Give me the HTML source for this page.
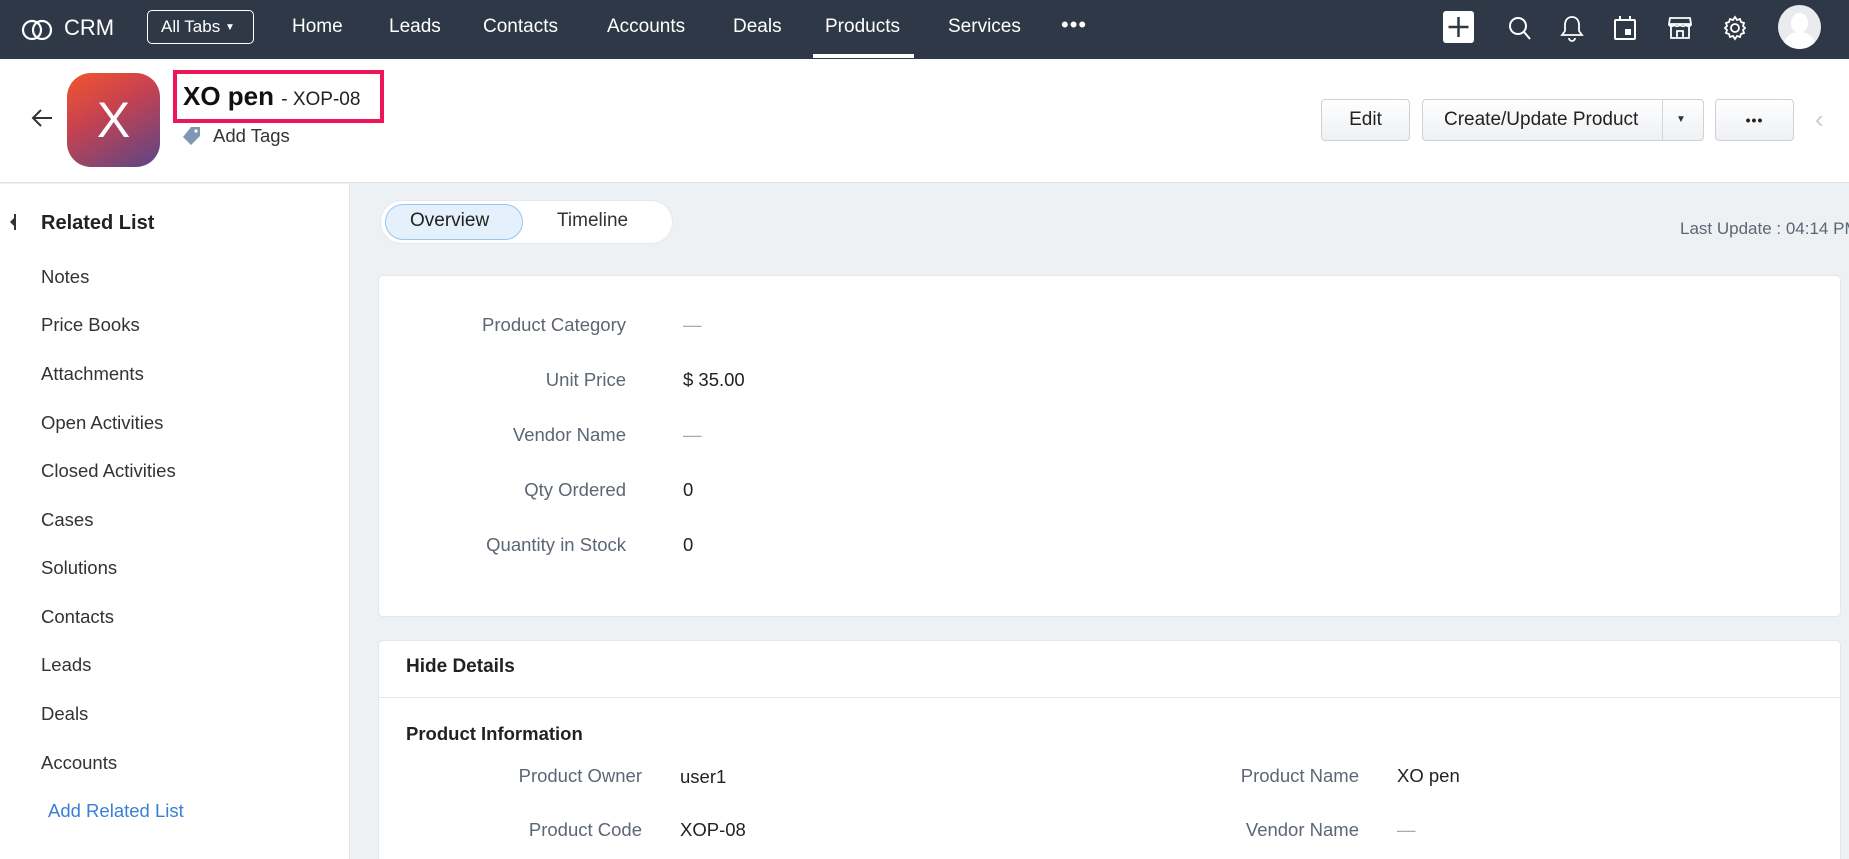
<!DOCTYPE html>
<html style="width:1849px;height:859px;overflow:hidden"><head><meta charset="utf-8"><style>
*{box-sizing:border-box;margin:0;padding:0}
body{width:1849px;height:859px;overflow:hidden;font-family:"Liberation Sans",sans-serif;background:#eef1f4;position:relative;color:#222}
.a{position:absolute;white-space:nowrap}
.nav{position:absolute;left:0;top:0;width:1849px;height:59px;background:#2f3846}
.nav .t{position:absolute;top:16px;color:#fff;font-size:19px}
.hdr{position:absolute;left:0;top:59px;width:1849px;height:124px;background:#fff;border-bottom:1px solid #dde1e6}
.side{position:absolute;left:0;top:184px;width:350px;height:675px;background:#fff;border-right:1px solid #e2e5e9}
.side .i{position:absolute;left:41px;font-size:18.5px;color:#333}
.btn{position:absolute;top:99px;height:42px;border:1px solid #cdd2d8;border-radius:4px;background:linear-gradient(#fff,#eef0f3);font-size:19px;color:#222;text-align:center;line-height:40px}
.card{position:absolute;left:378px;width:1463px;background:#fff;border:1px solid #e3e6ea;border-radius:5px}
.lb{position:absolute;font-size:18.5px;color:#5d6674;text-align:right}
.vl{position:absolute;font-size:18.5px;color:#222}
</style></head><body>
<div class="nav">
 <svg class="a" style="left:21px;top:16px" width="32" height="28" viewBox="0 0 32 28"><ellipse cx="11" cy="14" rx="9" ry="9" fill="none" stroke="#fff" stroke-width="2.2"/><ellipse cx="21" cy="14" rx="9" ry="9" fill="none" stroke="#fff" stroke-width="2.2"/></svg>
 <div class="t" style="left:64px;font-size:22px;top:15px">CRM</div>
 <div class="a" style="left:147px;top:10px;width:107px;height:34px;border:1.5px solid #fff;border-radius:5px;color:#fff;font-size:17px;line-height:31px;padding-left:13px">All Tabs <span style="font-size:10px;vertical-align:2px">▼</span></div>
 <div class="t" style="left:292px">Home</div>
 <div class="t" style="left:389px">Leads</div>
 <div class="t" style="left:483px">Contacts</div>
 <div class="t" style="left:607px">Accounts</div>
 <div class="t" style="left:733px">Deals</div>
 <div class="t" style="left:825px">Products</div>
 <div class="a" style="left:813px;top:54px;width:101px;height:4px;background:#fff"></div>
 <div class="t" style="left:948px">Services</div>
 <div class="t" style="left:1061px;top:12px;font-size:22px;letter-spacing:1px">•••</div>
 <div class="a" style="left:1443px;top:11px;width:31px;height:32px;background:#fff;border-radius:3px"></div>
 <svg class="a" style="left:1443px;top:11px" width="31" height="32"><path d="M15.5 6v20M5.5 16h20" stroke="#2f3846" stroke-width="2.5"/></svg>
 <svg class="a" style="left:1507px;top:14px" width="26" height="28" fill="none" stroke="#fff" stroke-width="2"><circle cx="11" cy="12" r="8"/><path d="M17 18l6 7"/></svg>
 <svg class="a" style="left:1560px;top:14px" width="24" height="28" fill="none" stroke="#fff" stroke-width="1.8"><path d="M12 3c-5 0-7 4-7 8v6l-3 4h20l-3-4v-6c0-4-2-8-7-8z"/><path d="M9 24a3 3 0 006 0"/></svg>
 <svg class="a" style="left:1613px;top:14px" width="24" height="28" fill="none" stroke="#fff" stroke-width="2"><rect x="2" y="6" width="20" height="19" rx="1"/><path d="M7 2v5M17 2v5"/><rect x="13" y="16" width="4" height="4" fill="#fff"/></svg>
 <svg class="a" style="left:1668px;top:14px" width="24" height="28" fill="none" stroke="#fff" stroke-width="1.8"><path d="M2 4h20l1 6H1zM3 10v14h18V10M9 24v-7h6v7M1 10c0 3 5 3 5 0c0 3 6 3 6 0c0 3 6 3 6 0c0 3 5 3 5 0"/></svg>
 <svg class="a" style="left:1722px;top:14px" width="26" height="28" fill="none" stroke="#fff" stroke-width="1.8"><circle cx="13" cy="14" r="4"/><path d="M13 3l2 3 3-1 1 3 3 1-1 3 2 2-2 2 1 3-3 1-1 3-3-1-2 3-2-3-3 1-1-3-3-1 1-3-2-2 2-2-1-3 3-1 1-3 3 1z"/></svg>
 <div class="a" style="left:1778px;top:5px;width:43px;height:44px;border-radius:50%;background:#e9ebee;overflow:hidden"><div class="a" style="left:13px;top:8px;width:17px;height:20px;border-radius:50%;background:#fff"></div><div class="a" style="left:6px;top:27px;width:31px;height:24px;border-radius:50%;background:#fff"></div></div>
</div>
<div class="hdr">
 <svg class="a" style="left:30px;top:49px" width="24" height="20" fill="none" stroke="#333" stroke-width="2"><path d="M22 10H3M11 2L3 10l8 8"/></svg>
 <div class="a" style="left:67px;top:14px;width:93px;height:94px;border-radius:24px;background:linear-gradient(150deg,#f2562f 0%,#c8424f 40%,#5a4687 100%);color:#fff;font-size:50px;text-align:center;line-height:94px">X</div>
 <div class="a" style="left:173px;top:11px;width:211px;height:53px;border:4px solid #ec1659"></div>
 <div class="a" style="left:183px;top:22px;font-size:26px;color:#111;font-weight:bold">XO pen <span style="font-size:19px;color:#222;font-weight:normal">- XOP-08</span></div>
 <svg class="a" style="left:181px;top:66px" width="22" height="22"><path d="M10 2h9v9L10 20 2 12z" fill="#7f97b0"/><circle cx="15" cy="6" r="1.6" fill="#fff"/></svg>
 <div class="a" style="left:213px;top:66px;font-size:18.5px;color:#333">Add Tags</div>
</div>
<div class="btn" style="left:1321px;width:89px">Edit</div>
<div class="btn" style="left:1422px;width:282px;text-align:left;padding-left:21px">Create/Update Product<div class="a" style="left:239px;top:0;width:1px;height:40px;background:#d3d7dc"></div><span class="a" style="left:253px;top:0;font-size:10px;color:#333">▼</span></div>
<div class="btn" style="left:1715px;width:79px;font-size:14px;font-weight:bold;letter-spacing:1px">•••</div>
<div class="a" style="left:1815px;top:104px;font-size:26px;color:#c8ccd2">‹</div>
<div class="side">
 <div class="a" style="left:14px;top:30px;width:2px;height:16px;background:#333"></div><div class="a" style="left:10px;top:34px;width:0;height:0;border:4px solid transparent;border-right-color:#333;border-left:0"></div>
 <div class="i" style="top:28px;font-size:20px;font-weight:bold;color:#222">Related List</div>
 <div class="i" style="top:82px">Notes</div>
 <div class="i" style="top:130px">Price Books</div>
 <div class="i" style="top:179px">Attachments</div>
 <div class="i" style="top:228px">Open Activities</div>
 <div class="i" style="top:276px">Closed Activities</div>
 <div class="i" style="top:325px">Cases</div>
 <div class="i" style="top:373px">Solutions</div>
 <div class="i" style="top:422px">Contacts</div>
 <div class="i" style="top:470px">Leads</div>
 <div class="i" style="top:519px">Deals</div>
 <div class="i" style="top:568px">Accounts</div>
 <div class="i" style="top:616px;left:48px;color:#3a7fd5">Add Related List</div>
</div>
<div class="a" style="left:380px;top:200px;width:293px;height:44px;background:#fff;border-radius:22px;border:1px solid #e5e8ec"></div>
<div class="a" style="left:385px;top:204px;width:138px;height:36px;background:#e4f0fb;border:1px solid #9cc5ea;border-radius:18px"></div>
<div class="a" style="left:410px;top:210px;font-size:19px;color:#222">Overview</div>
<div class="a" style="left:557px;top:210px;font-size:19px;color:#333">Timeline</div>
<div class="a" style="left:1680px;top:219px;font-size:17px;color:#5d6674">Last Update : 04:14 PM</div>
<div class="card" style="top:275px;height:342px"></div>
<div class="lb" style="right:1223px;top:314px">Product Category</div><div class="vl" style="left:683px;top:314px;color:#aaa">—</div>
<div class="lb" style="right:1223px;top:369px">Unit Price</div><div class="vl" style="left:683px;top:369px">$ 35.00</div>
<div class="lb" style="right:1223px;top:424px">Vendor Name</div><div class="vl" style="left:683px;top:424px;color:#aaa">—</div>
<div class="lb" style="right:1223px;top:479px">Qty Ordered</div><div class="vl" style="left:683px;top:479px">0</div>
<div class="lb" style="right:1223px;top:534px">Quantity in Stock</div><div class="vl" style="left:683px;top:534px">0</div>
<div class="card" style="top:640px;height:219px;border-bottom:none;border-radius:5px 5px 0 0"></div>
<div class="a" style="left:406px;top:656px;font-size:19px;font-weight:bold;color:#222">Hide Details</div>
<div class="a" style="left:379px;top:697px;width:1461px;height:1px;background:#e3e6ea"></div>
<div class="a" style="left:406px;top:723px;font-size:18.5px;font-weight:bold;color:#222">Product Information</div>
<div class="lb" style="right:1207px;top:765px">Product Owner</div><div class="vl" style="left:680px;top:766px">user1</div>
<div class="lb" style="right:1207px;top:819px">Product Code</div><div class="vl" style="left:680px;top:819px">XOP-08</div>
<div class="lb" style="right:490px;top:765px">Product Name</div><div class="vl" style="left:1397px;top:765px">XO pen</div>
<div class="lb" style="right:490px;top:819px">Vendor Name</div><div class="vl" style="left:1397px;top:819px;color:#aaa">—</div>
</body></html>
